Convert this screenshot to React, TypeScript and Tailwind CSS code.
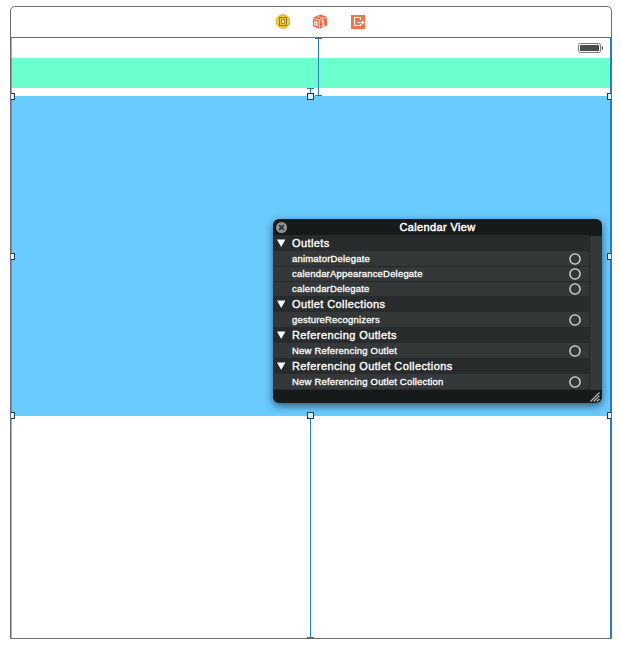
import React from "react";

type Group = { title: string; items: string[] };

const groups: Group[] = [
  { title: "Outlets", items: ["animatorDelegate", "calendarAppearanceDelegate", "calendarDelegate"] },
  { title: "Outlet Collections", items: ["gestureRecognizers"] },
  { title: "Referencing Outlets", items: ["New Referencing Outlet"] },
  { title: "Referencing Outlet Collections", items: ["New Referencing Outlet Collection"] },
];

function Handle({ place }: { place: string }) {
  return <div className={"absolute border border-[#233746] bg-[#dcf1fb] " + place} />;
}

function Toolbar() {
  return (
    <div className="flex h-[31px] items-center border-b border-[#6b6b6b] pl-[264px]">
      <svg width="16" height="16" viewBox="0 0 16 16">
        <circle cx="8" cy="7.5" r="6.8" fill="#f8c833" stroke="#e2ac2f" strokeWidth="1" />
        <rect x="4.5" y="3.5" width="7" height="8" fill="#f4c83d" stroke="#94751d" />
        <rect x="6.5" y="5.5" width="3" height="4" fill="#fff1b5" stroke="#ae8a24" />
      </svg>
      <svg className="ml-[21px]" width="16" height="16" viewBox="0 0 16 16">
        <path d="M1 3.6 8.6 .6 15 2.8V11.6L7 15 1 12.3Z" fill="#ee6b45" />
        <path d="M1 4.3 7 6.2 15 3.4M7.2 6.4V15" fill="none" stroke="#fff" strokeWidth=".8" />
        <path d="M5 3.5 8 2.3M8 4.3 11 3" stroke="#ffd2c2" strokeWidth=".8" />
        <path d="M2.8 7.4 4.9 8.1V11.6L2.8 10.9Z" fill="none" stroke="#fff" strokeWidth="1.1" />
        <path d="m9.8 7.8 1.4-.8V12M9.8 12.5l2.9-1.1" fill="none" stroke="#fff" strokeWidth="1.2" />
      </svg>
      <svg className="ml-[22px]" width="16" height="16" viewBox="0 0 16 16">
        <path d="M1 1h14v14H1z" fill="#f17348" />
        <path d="M10.5 6V3.5h-6v8h6V10M7.5 8.5h6M11.8 6.6l1.9 1.9-1.9 1.9" fill="none" stroke="#fff" strokeWidth="1.1" />
      </svg>
    </div>
  );
}

function OutletPanel() {
  return (
    <div className="absolute left-[262px] top-[181px] flex h-[184px] w-[329px] flex-col overflow-hidden rounded-[6px] bg-[#171a1b] font-['Liberation_Sans',Arial,sans-serif] text-white shadow-[0_3px_8px_rgba(0,20,40,0.6)]">
      <div className="relative flex h-4 shrink-0 items-center justify-center">
        <svg className="absolute left-[2px] top-[2px]" width="13" height="13" viewBox="0 0 13 13">
          <circle cx="6.5" cy="6.5" r="5.5" fill="#929494" />
          <path d="m4.2 4.2 4.6 4.6m0-4.6L4.2 8.8" stroke="#303333" strokeWidth="1.8" />
        </svg>
        <span className="text-[11px] leading-4 tracking-[0.36px] [-webkit-text-stroke:0.45px_white]">Calendar View</span>
      </div>
      <div className="flex h-[155px] shrink-0">
        <div className="w-[316px] bg-[#282b2c]">
          {groups.map((g) => (
            <div key={g.title}>
              <div className="flex h-4 items-center bg-[#282b2c]">
                <svg className="ml-1 mr-[6px] shrink-0" width="9" height="8" viewBox="0 0 9 8">
                  <path d="M0 .5h8.4L4.2 8z" fill="white" />
                </svg>
                <span className="whitespace-nowrap text-[11px] leading-4 tracking-[0.4px] [-webkit-text-stroke:0.35px_white]">{g.title}</span>
              </div>
              {g.items.map((label, i) => (
                <div
                  key={label}
                  className={"flex h-[15px] items-center justify-between bg-[#353839] pl-[19px] pr-2 " + (i > 0 ? "border-t border-[#262929]" : "")}
                >
                  <span className="whitespace-nowrap text-[9.5px] leading-[14px] tracking-[0.19px] [-webkit-text-stroke:0.3px_white]">{label}</span>
                  <svg className="shrink-0" width="12" height="12" viewBox="0 0 12 12">
                    <circle cx="6" cy="6" r="5.1" fill="none" stroke="#e4e5e5" strokeWidth="1.3" />
                  </svg>
                </div>
              ))}
            </div>
          ))}
        </div>
        <div className="mt-px flex-1 border-l border-[#232627] bg-[#353839]" />
      </div>
      <div className="flex flex-1 items-center justify-end pr-[2px]">
        <svg width="10" height="10" viewBox="0 0 10 10">
          <path d="m.5 9.5 9-9M3.7 9.5l5.8-5.8M6.9 9.5l2.6-2.6" stroke="#bfc1c1" strokeWidth="1.1" />
        </svg>
      </div>
    </div>
  );
}

export default function App() {
  return (
    <div className="h-[649px] w-[621px] overflow-hidden bg-white pl-[10px] pt-[6px]">
      <div className="h-[633px] w-[602px] rounded-t-[5px] border border-[#6b6b6b]">
        <Toolbar />
        <div className="relative flex h-[600px] flex-col">
          <div className="flex h-5 items-center justify-end pr-[7px]">
            <svg width="26" height="10" viewBox="0 0 26 10">
              <rect x=".5" y=".5" width="22" height="9" rx="1.8" fill="white" stroke="#777" />
              <rect x="2" y="2" width="19" height="6" rx=".5" fill="#4b4b4b" />
              <path d="M23.8 2.8q1.4.3 1.4 2.2t-1.4 2.2z" fill="#555" />
            </svg>
          </div>
          <div className="h-[30px] bg-[#6cffce]" />
          <div className="mt-2 h-[320px] bg-[#6acbff]" />
          <div className="absolute left-0 top-0 h-[600px] w-px bg-[#3b7fb8]/60" />
          <div className="absolute right-0 top-0 h-[600px] w-px bg-[#2b7cbf]" />
          <div className="absolute left-[304px] top-0 flex h-[58px] w-[7px] justify-center border-y border-[#2b7cbf]">
            <div className="w-px bg-[#2b7cbf]" />
          </div>
          <div className="absolute left-[296px] top-[50px] flex h-2 w-[7px] justify-center border-y border-[#2b7cbf]">
            <div className="w-px bg-[#2b7cbf]" />
          </div>
          <div className="absolute left-[296px] top-[378px] flex h-[222px] w-[7px] justify-center border-b border-[#2b7cbf]">
            <div className="w-px bg-[#2b7cbf]" />
          </div>
          <OutletPanel />
          <Handle place="left-0 top-[55px] h-[7px] w-1 border-l-0" />
          <Handle place="left-[296px] top-[55px] h-[7px] w-[7px]" />
          <Handle place="right-0 top-[55px] h-[7px] w-1 border-r-0" />
          <Handle place="left-0 top-[215px] h-[7px] w-1 border-l-0" />
          <Handle place="right-0 top-[215px] h-[7px] w-1 border-r-0" />
          <Handle place="left-0 top-[374px] h-[7px] w-1 border-l-0" />
          <Handle place="left-[296px] top-[374px] h-[7px] w-[7px]" />
          <Handle place="right-0 top-[374px] h-[7px] w-1 border-r-0" />
        </div>
      </div>
    </div>
  );
}
